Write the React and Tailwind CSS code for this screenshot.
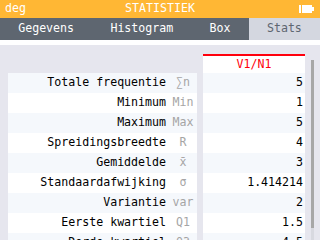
import React from 'react';

const rows = [
  { label: 'Totale frequentie', sym: '∑n', value: '5' },
  { label: 'Minimum', sym: 'Min', value: '1' },
  { label: 'Maximum', sym: 'Max', value: '5' },
  { label: 'Spreidingsbreedte', sym: 'R', value: '4' },
  { label: 'Gemiddelde', sym: 'x̄', value: '3' },
  { label: 'Standaardafwijking', sym: 'σ', value: '1.414214' },
  { label: 'Variantie', sym: 'var', value: '2' },
  { label: 'Eerste kwartiel', sym: 'Q1', value: '1.5' },
  { label: 'Derde kwartiel', sym: 'Q3', value: '4.5' },
];

const tabs = ['Gegevens', 'Histogram', 'Box', 'Stats'];

const Battery = () => (
  <svg width="16" height="8" viewBox="0 0 16 8" className="block">
    <rect x="0" y="0" width="2" height="8" fill="#fff" />
    <rect x="3" y="0" width="10" height="8" fill="#fff" />
    <rect x="13" y="2" width="2" height="4" fill="#fff" />
  </svg>
);

export default function App() {
  return (
    <div
      className="w-[320px] h-[240px] overflow-hidden bg-[#e6e6ee] text-[11.6px] leading-none"
      style={{ fontFamily: '"DejaVu Sans Mono", "Liberation Mono", monospace' }}
    >
      {/* status bar */}
      <div className="relative h-[18px] bg-[#ffb734] text-white flex items-center px-[5px]">
        <span>deg</span>
        <span className="absolute left-0 right-0 text-center">STATISTIEK</span>
        <div className="ml-auto mr-[0px]">
          <Battery />
        </div>
      </div>

      {/* tabs */}
      <div className="flex h-[22px] bg-[#5e6670]">
        {tabs.map((t) => (
          <div
            key={t}
            className={`flex-auto flex items-center justify-center ${
              t === 'Stats' ? 'bg-[#d4d7e0] text-[#5e6670]' : 'text-white'
            }`}
          >
            {t}
          </div>
        ))}
      </div>
      <div className="h-[5px] bg-white" />

      {/* table */}
      <div className="flex pl-[8px]">
        <div className="w-[189px] mt-[28px] text-black">
          {rows.map((r, i) => (
            <div
              key={r.label}
              className={`h-[20px] flex items-center justify-end pr-[1px] ${
                i % 2 === 0 ? 'bg-[#f5f8fc]' : 'bg-white'
              }`}
            >
              <span>{r.label}</span>
              <span className="w-[26px] ml-[4px] text-center text-[#a5a5a5]">{r.sym}</span>
            </div>
          ))}
        </div>

        <div className="w-[102px] ml-[6px] mt-[9px] border-t-2 border-[#ff000c]">
          <div className="h-[17px] bg-white flex items-center justify-center text-[#ff000c]">
            V1/N1
          </div>
          {rows.map((r, i) => (
            <div
              key={r.label}
              className={`h-[20px] flex items-center justify-end pr-[2px] text-black ${
                i % 2 === 0 ? 'bg-[#f5f8fc]' : 'bg-white'
              }`}
            >
              {r.value}
            </div>
          ))}
        </div>

        <div className="w-[3px] ml-[6px] mt-[15px] flex flex-col">
          <div className="h-[168px] bg-[#a7a7a7]" />
          <div className="h-[20px] bg-[#d8d9e0]" />
        </div>
      </div>
    </div>
  );
}
